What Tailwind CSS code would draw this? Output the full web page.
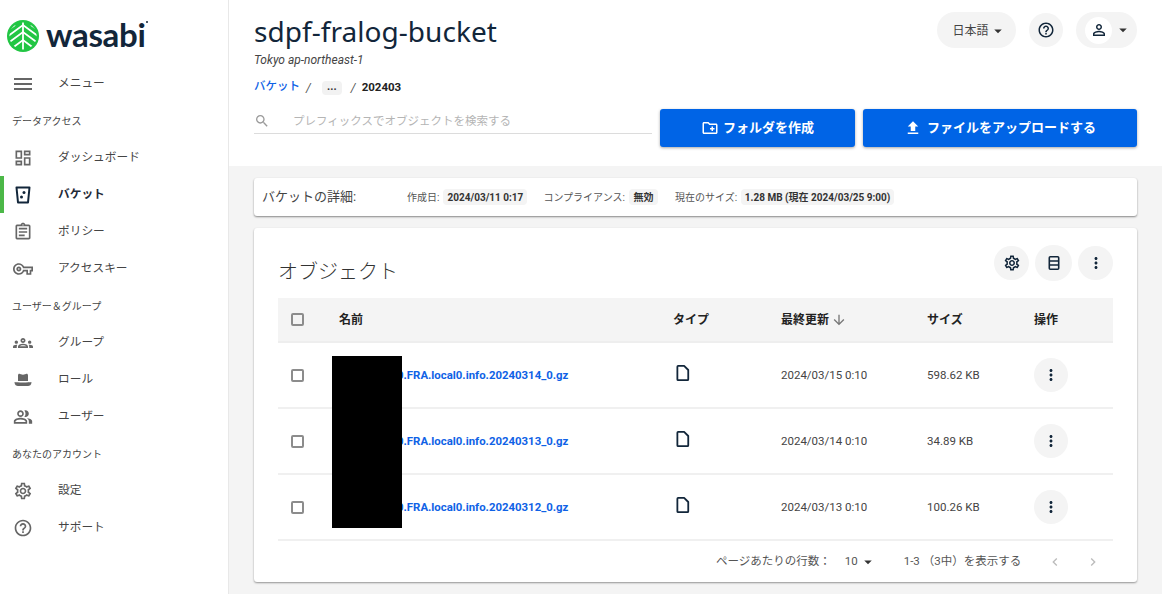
<!DOCTYPE html>
<html lang="ja">
<head>
  <meta charset="UTF-8">
  <meta name="viewport" content="width=device-width, initial-scale=1.0">
  <title>sdpf-fralog-bucket</title>
  <script src="https://cdn.jsdelivr.net/npm/@tailwindcss/browser@4"></script>
</head>
<body class="bg-white h-[594px] w-[1162px] overflow-hidden flex font-['Roboto','Noto_Sans_CJK_JP',sans-serif] text-[#333]">
  <svg class="hidden">
    <symbol id="i-more" viewBox="0 0 24 24"><path d="M12 8c1.100 0 2-.9 2-2s-.9-2-2-2-2 .9-2 2 .9 2 2 2zm0 2c-1.100 0-2 .9-2 2s.9 2 2 2 2-.9 2-2-.9-2-2-2zm0 6c-1.100 0-2 .9-2 2s.9 2 2 2 2-.9 2-2-.9-2-2-2z"/></symbol>
    <symbol id="i-gear" viewBox="0 0 24 24"><path d="M19.43 12.98c.04-.32.07-.64.07-.98 0-.34-.03-.66-.07-.98l2.11-1.65c.19-.15.24-.42.12-.64l-2-3.46c-.09-.16-.26-.25-.44-.25-.06 0-.12.01-.17.03l-2.49 1c-.52-.4-1.08-.73-1.69-.98l-.38-2.65C14.46 2.18 14.25 2 14 2h-4c-.25 0-.46.18-.49.42l-.38 2.65c-.61.25-1.17.59-1.69.98l-2.49-1c-.06-.02-.12-.03-.18-.03-.17 0-.34.09-.43.25l-2 3.46c-.13.22-.07.49.12.64l2.11 1.65c-.04.32-.07.65-.07.98 0 .33.03.66.07.98l-2.11 1.65c-.19.15-.24.42-.12.64l2 3.46c.09.16.26.25.44.25.06 0 .12-.01.17-.03l2.49-1c.52.4 1.08.73 1.69.98l.38 2.65c.03.24.24.42.49.42h4c.25 0 .46-.18.49-.42l.38-2.65c.61-.25 1.17-.59 1.69-.98l2.49 1c.06.02.12.03.18.03.17 0 .34-.09.43-.25l2-3.46c.12-.22.07-.49-.12-.64l-2.11-1.65zm-1.98-1.71c.04.31.05.52.05.73 0 .21-.02.43-.05.73l-.14 1.13.89.7 1.08.84-.7 1.21-1.27-.51-1.04-.42-.9.68c-.43.32-.84.56-1.25.73l-1.06.43-.16 1.13-.2 1.35h-1.4l-.19-1.35-.16-1.13-1.06-.43c-.43-.18-.83-.41-1.23-.71l-.91-.7-1.06.43-1.27.51-.7-1.21 1.08-.84.89-.7-.14-1.13c-.03-.31-.05-.54-.05-.74s.02-.43.05-.73l.14-1.13-.89-.7-1.08-.84.7-1.21 1.27.51 1.04.42.9-.68c.43-.32.84-.56 1.25-.73l1.06-.43.16-1.13.2-1.35h1.39l.19 1.35.16 1.13 1.06.43c.43.18.83.41 1.23.71l.91.7 1.06-.43 1.27-.51.7 1.21-1.07.85-.89.7.14 1.13zM12 8c-2.21 0-4 1.79-4 4s1.79 4 4 4 4-1.79 4-4-1.79-4-4-4zm0 6c-1.100 0-2-.9-2-2s.9-2 2-2 2 .9 2 2-.9 2-2 2z"/></symbol>
    <symbol id="i-help" viewBox="0 0 24 24"><path d="M11 18h2v-2h-2v2zm1-16C6.48 2 2 6.48 2 12s4.48 10 10 10 10-4.48 10-10S17.52 2 12 2zm0 18c-4.41 0-8-3.59-8-8s3.59-8 8-8 8 3.59 8 8-3.59 8-8 8zm0-14c-2.21 0-4 1.79-4 4h2c0-1.100.9-2 2-2s2 .9 2 2c0 2-3 1.75-3 5h2c0-2.25 3-2.5 3-5 0-2.21-1.79-4-4-4z"/></symbol>
    <symbol id="i-caret" viewBox="0 0 24 24"><path d="M7 10l5 5 5-5z"/></symbol>
    <symbol id="i-file" viewBox="0 0 24 24"><path d="M5.500 2.500h8l5.500 5.500v12.500a1 1 0 0 1-1 1H5.500a1 1 0 0 1-1-1v-17a1 1 0 0 1 1-1z" fill="none" stroke="#12263a" stroke-width="2.400" stroke-linejoin="round"/></symbol>
  </svg>

  <!-- サイドバー -->
  <aside class="w-[229px] shrink-0 border-r border-[#e8e8e8] bg-white">
    <div class="h-[65px] relative flex items-start pt-[20px] pl-[7px]">
      <svg class="w-[32px] h-[32px] shrink-0" viewBox="0 0 32 32">
        <defs><clipPath id="logo-clip"><circle cx="16" cy="16" r="13.600"/></clipPath></defs>
        <circle cx="16" cy="16" r="16" fill="#22c644"/>
        <g clip-path="url(#logo-clip)" fill="none" stroke="#fff" stroke-width="1.800">
          <path d="M16 2v28"/>
          <path d="M1 10l7-5M31 10l-7-5"/>
          <path d="M1 16l15-11 15 11"/>
          <path d="M1 23l15-11 15 11"/>
          <path d="M4 29l12-9 12 9"/>
        </g>
      </svg>
      <span class="ml-[7px] mt-[-6px] text-[33px] leading-[40px] font-bold tracking-[-0.3px] text-[#12263a] font-['Lato',sans-serif]">wasabi</span>
      <span class="w-[2px] h-[2px] mt-[1px] rounded-full bg-[#12263a]"></span>
    </div>
    <nav class="text-[11.7px] text-[#444]">
      <div class="h-[37px] flex items-center">
        <svg class="w-[24px] h-[24px] ml-[11px] fill-[#666]" viewBox="0 0 24 24"><path d="M3 18h18v-2H3v2zm0-5h18v-2H3v2zm0-7v2h18V6H3z"/></svg>
        <span class="ml-[23px] pt-[1px]">メニュー</span>
      </div>
      <div class="h-[37px] flex items-center pl-[12px] pt-[2px] text-[10px] text-[#444]">データアクセス</div>
      <div class="h-[37px] flex items-center">
        <svg class="w-[20px] h-[20px] ml-[13px] fill-[#666]" viewBox="0 0 24 24"><path d="M19 5v2h-4V5h4M9 5v6H5V5h4m10 8v6h-4v-6h4M9 17v2H5v-2h4M21 3h-8v6h8V3zM11 3H3v10h8V3zm10 8h-8v10h8V11zm-10 4H3v6h8v-6z"/></svg>
        <span class="ml-[25px] pt-[1px]">ダッシュボード</span>
      </div>
      <div class="h-[37px] flex items-center border-l-[4px] border-[#4cb848] font-bold text-[#1f2a37]">
        <svg class="w-[20px] h-[20px] ml-[9px]" viewBox="0 0 20 20"><path d="M3.500 2.500h13l-1.500 15H5z" fill="none" stroke="#12263a" stroke-width="2" stroke-linejoin="round"/><circle cx="11" cy="7.500" r="1.500" fill="#12263a"/><circle cx="8.500" cy="12" r="1.500" fill="#12263a"/></svg>
        <span class="ml-[25px] pt-[1px]">バケット</span>
      </div>
      <div class="h-[37px] flex items-center">
        <svg class="w-[20px] h-[20px] ml-[13px] fill-[#666]" viewBox="0 0 24 24"><path d="M7 15h7v2H7zm0-4h10v2H7zm0-4h10v2H7zm12-4h-4.18C14.4 1.84 13.3 1 12 1c-1.3 0-2.4.84-2.82 2H5c-.14 0-.27.01-.4.04-.39.08-.74.28-1.01.55-.18.18-.33.4-.43.64-.1.23-.16.49-.16.77v14c0 .27.06.54.16.78s.25.45.43.64c.27.27.62.47 1.01.55.13.02.26.03.4.03h14c1.100 0 2-.9 2-2V5c0-1.100-.9-2-2-2zm-7-.25c.41 0 .75.34.75.75s-.34.75-.75.75-.75-.34-.75-.75.34-.75.75-.75zM19 19H5V5h14v14z"/></svg>
        <span class="ml-[25px] pt-[1px]">ポリシー</span>
      </div>
      <div class="h-[37px] flex items-center">
        <svg class="w-[20px] h-[20px] ml-[13px] fill-[#666]" viewBox="0 0 24 24"><path d="M22 19h-6v-4h-2.68c-1.14 2.42-3.6 4-6.32 4-3.86 0-7-3.14-7-7s3.14-7 7-7c2.72 0 5.17 1.58 6.32 4H24v6h-2v4zm-4-2h2v-4h2v-2H11.94l-.23-.67C11.01 8.34 9.11 7 7 7c-2.76 0-5 2.24-5 5s2.24 5 5 5c2.11 0 4.01-1.34 4.71-3.33l.23-.67H18v4zM7 15c-1.65 0-3-1.35-3-3s1.35-3 3-3 3 1.35 3 3-1.35 3-3 3zm0-4c-.55 0-1 .45-1 1s.45 1 1 1 1-.45 1-1-.45-1-1-1z"/></svg>
        <span class="ml-[25px] pt-[1px]">アクセスキー</span>
      </div>
      <div class="h-[37px] flex items-center pl-[12px] pt-[2px] text-[10px] text-[#444]">ユーザー＆グループ</div>
      <div class="h-[37px] flex items-center">
        <svg class="w-[20px] h-[20px] ml-[13px] fill-[#666]" viewBox="0 0 24 24"><path d="M4 13c1.100 0 2-.9 2-2s-.9-2-2-2-2 .9-2 2 .9 2 2 2zm1.13 1.100c-.37-.06-.74-.1-1.13-.1-.99 0-1.93.21-2.78.58C.48 14.9 0 15.62 0 16.43V18h4.500v-1.61c0-.83.23-1.61.63-2.29zM20 13c1.100 0 2-.9 2-2s-.9-2-2-2-2 .9-2 2 .9 2 2 2zm4 3.43c0-.81-.48-1.53-1.22-1.85-.85-.37-1.79-.58-2.78-.58-.39 0-.76.04-1.13.1.4.68.63 1.46.63 2.29V18H24v-1.57zm-7.76-2.78c-1.17-.52-2.61-.9-4.24-.9-1.63 0-3.07.39-4.24.9C6.68 14.13 6 15.21 6 16.39V18h12v-1.61c0-1.18-.68-2.26-1.76-2.74zM8.07 16c.09-.23.13-.39.91-.69.97-.38 1.99-.56 3.02-.56s2.05.18 3.02.56c.77.3.81.46.91.69H8.07zM12 8c.55 0 1 .45 1 1s-.45 1-1 1-1-.45-1-1 .45-1 1-1m0-2c-1.66 0-3 1.34-3 3s1.34 3 3 3 3-1.34 3-3-1.34-3-3-3z"/></svg>
        <span class="ml-[25px] pt-[1px]">グループ</span>
      </div>
      <div class="h-[37px] flex items-center">
        <svg class="w-[20px] h-[20px] ml-[13px] fill-[#666]" viewBox="0 0 20 20"><path d="M5 5.500C5 4 6 3.500 7 4l3 .8L13 4c1-.5 2 0 2 1.500V11H5z"/><path d="M1.500 12c2 .6 15 .6 17 0 0 3-2 4-3.500 4H5c-1.500 0-3.500-1-3.500-4z"/></svg>
        <span class="ml-[25px] pt-[1px]">ロール</span>
      </div>
      <div class="h-[37px] flex items-center">
        <svg class="w-[20px] h-[20px] ml-[13px] fill-[#666]" viewBox="0 0 24 24"><path d="M16.67 13.13C18.04 14.06 19 15.32 19 17v3h4v-3c0-2.18-3.57-3.47-6.33-3.87zM15 12c2.21 0 4-1.79 4-4s-1.79-4-4-4c-.47 0-.91.1-1.33.24C14.5 5.27 15 6.58 15 8s-.5 2.73-1.33 3.76c.42.14.86.24 1.33.24zM9 12c2.21 0 4-1.79 4-4s-1.79-4-4-4-4 1.79-4 4 1.79 4 4 4zm0-6c1.100 0 2 .9 2 2s-.9 2-2 2-2-.9-2-2 .9-2 2-2zM9 13c-2.67 0-8 1.34-8 4v3h16v-3c0-2.66-5.33-4-8-4zm6 5H3v-.99C3.2 16.29 6.3 15 9 15s5.800 1.290 6 2v1z"/></svg>
        <span class="ml-[25px] pt-[1px]">ユーザー</span>
      </div>
      <div class="h-[37px] flex items-center pl-[12px] pt-[2px] text-[10px] text-[#444]">あなたのアカウント</div>
      <div class="h-[37px] flex items-center">
        <svg class="w-[20px] h-[20px] ml-[13px] fill-[#666]"><use href="#i-gear"/></svg>
        <span class="ml-[25px] pt-[1px]">設定</span>
      </div>
      <div class="h-[37px] flex items-center">
        <svg class="w-[20px] h-[20px] ml-[13px] fill-[#666]"><use href="#i-help"/></svg>
        <span class="ml-[25px] pt-[1px]">サポート</span>
      </div>
    </nav>
  </aside>

  <main class="flex-1 min-w-0 bg-[#f4f4f4]">
    <!-- ヘッダー -->
    <header class="h-[166px] bg-white pl-[25px] pr-[25px] pt-[11px]">
      <div class="h-[98px] flex justify-between items-start">
        <div>
          <h1 class="text-[28px] leading-[40px] text-[#12263a] tracking-[0.05px] font-['Noto_Sans',sans-serif]">sdpf-fralog-bucket</h1>
          <p class="text-[12px] leading-[16px] italic text-[#444] mt-[1px]">Tokyo ap-northeast-1</p>
          <div class="flex items-center h-[20px] mt-[10px] text-[12px]">
            <span class="text-[11.500px] font-medium text-[#0f62e6] -mt-[3px]">バケット</span>
            <span class="ml-[6px] italic text-[#555]">/</span>
            <span class="ml-[11px] w-[20px] h-[14px] rounded-sm bg-[#f2f2f2] flex items-center justify-center text-[11px] font-bold leading-none pb-[3px]">...</span>
            <span class="ml-[9px] italic text-[#555]">/</span>
            <span class="ml-[6px] text-[11.500px] font-bold text-[#222]">202403</span>
          </div>
        </div>
        <div class="flex items-center pt-[1px]">
          <button class="w-[79px] h-[36px] rounded-full bg-[#f4f4f4] flex items-center justify-center pl-[6px] pt-[1px] text-[12px] text-[#444]">
            日本語<svg class="w-[18px] h-[18px] fill-[#333]"><use href="#i-caret"/></svg>
          </button>
          <button class="ml-[13px] w-[34px] h-[34px] rounded-full bg-[#f4f4f4] flex items-center justify-center">
            <svg class="w-[18px] h-[18px] fill-[#12263a]"><use href="#i-help"/></svg>
          </button>
          <button class="ml-[13px] w-[61px] h-[36px] rounded-full bg-[#f4f4f4] flex items-center pl-[9px]">
            <span class="w-[27px] h-[27px] rounded-full bg-white flex items-center justify-center">
              <svg class="w-[18px] h-[18px] fill-[#12263a]" viewBox="0 0 24 24"><path d="M12 5.900c1.160 0 2.100.94 2.100 2.100s-.94 2.100-2.100 2.100S9.900 9.160 9.900 8s.94-2.100 2.100-2.100m0 9c2.970 0 6.100 1.460 6.100 2.100v1.100H5.900V17c0-.64 3.130-2.100 6.100-2.100M12 4C9.790 4 8 5.790 8 8s1.790 4 4 4 4-1.790 4-4-1.790-4-4-4zm0 9c-2.670 0-8 1.340-8 4v3h16v-3c0-2.660-5.330-4-8-4z"/></svg>
            </span>
            <svg class="w-[18px] h-[18px] ml-[2px] fill-[#333]"><use href="#i-caret"/></svg>
          </button>
        </div>
      </div>
      <div class="flex items-start">
        <div class="w-[398px] h-[25px] border-b border-[#dcdcdc] flex items-center">
          <svg class="w-[16px] h-[16px] fill-[#9a9a9a] shrink-0" viewBox="0 0 24 24"><path d="M15.500 14h-.79l-.28-.27C15.410 12.590 16 11.110 16 9.500 16 5.910 13.090 3 9.500 3S3 5.910 3 9.500 5.910 16 9.500 16c1.610 0 3.090-.59 4.230-1.570l.27.28v.79l5 4.990L20.490 19l-4.990-5zm-6 0C7.010 14 5 11.990 5 9.500S7.010 5 9.500 5 14 7.010 14 9.500 11.990 14 9.500 14z"/></svg>
          <span class="ml-[23px] pt-[1px] text-[11.500px] text-[#b5b5b5]">プレフィックスでオブジェクトを検索する</span>
        </div>
        <button class="ml-[8px] w-[195px] h-[38px] rounded-[3px] bg-[#0064e6] shadow-[0_1px_3px_rgba(0,0,0,0.35)] flex items-center justify-center text-white text-[13px] font-bold">
          <svg class="w-[18px] h-[18px] fill-white mr-[4px]" viewBox="0 0 24 24"><path d="M20 6h-8l-2-2H4c-1.110 0-1.990.89-1.990 2L2 18c0 1.110.89 2 2 2h16c1.110 0 2-.89 2-2V8c0-1.110-.89-2-2-2zm0 12H4V6h5.170l2 2H20v10zm-8-4h2v2h2v-2h2v-2h-2v-2h-2v2h-2z"/></svg>
          フォルダを作成
        </button>
        <button class="ml-[8px] w-[274px] h-[38px] rounded-[3px] bg-[#0064e6] shadow-[0_1px_3px_rgba(0,0,0,0.35)] flex items-center justify-center text-white text-[13px] font-bold">
          <svg class="w-[18px] h-[18px] fill-white mr-[5px]" viewBox="0 0 24 24"><path d="M5 20h14v-2H5v2zm0-10h4v6h6v-6h4l-7-7-7 7z"/></svg>
          ファイルをアップロードする
        </button>
      </div>
    </header>

    <div class="px-[25px] pt-[12px]">
      <!-- バケットの詳細 -->
      <section class="h-[38px] bg-white rounded-[3px] shadow-[0_1px_2px_rgba(0,0,0,0.45)] flex items-center pl-[8px] text-[10px] text-[#555]">
        <span class="w-[145px] text-[13px] text-[#444]">バケットの詳細:</span>
        <span>作成日:</span>
        <span class="ml-[4px] w-[84px] h-[16px] rounded-sm bg-[#f4f4f4] flex items-center justify-center font-bold text-[#333]">2024/03/11 0:17</span>
        <span class="ml-[16px]">コンプライアンス:</span>
        <span class="ml-[4px] w-[29px] h-[16px] rounded-sm bg-[#f4f4f4] flex items-center justify-center font-bold text-[#333]">無効</span>
        <span class="ml-[17px]">現在のサイズ:</span>
        <span class="ml-[4px] w-[153px] h-[16px] rounded-sm bg-[#f4f4f4] flex items-center justify-center font-bold text-[#333]">1.28 MB (現在 2024/03/25 9:00)</span>
      </section>

      <!-- オブジェクト -->
      <section class="mt-[12px] h-[354px] bg-white rounded-[3px] shadow-[0_1px_2px_rgba(0,0,0,0.4)] px-[24px] relative">
        <div class="h-[70px] flex items-center justify-between pt-[17px]">
          <h2 class="text-[20px] text-[#333] font-light">オブジェクト</h2>
          <div class="flex items-center gap-[6px] mt-[-17px]">
            <span class="w-[35px] h-[34px] rounded-full bg-[#f4f4f4] flex items-center justify-center"><svg class="w-[18px] h-[18px] fill-[#12263a]"><use href="#i-gear"/></svg></span>
            <span class="w-[37px] h-[36px] rounded-full bg-[#f4f4f4] flex items-center justify-center">
              <svg class="w-[16px] h-[16px]" viewBox="0 0 16 16" fill="none" stroke="#12263a" stroke-width="1.600"><rect x="3.300" y="1.800" width="9.400" height="12.400" rx="1"/><path d="M3.300 6h9.400M3.300 10h9.400"/></svg>
            </span>
            <span class="w-[35px] h-[34px] rounded-full bg-[#f4f4f4] flex items-center justify-center"><svg class="w-[18px] h-[18px] fill-[#12263a]"><use href="#i-more"/></svg></span>
          </div>
        </div>

        <div class="grid grid-cols-[61px_334px_108px_146px_107px_1fr] items-center h-[45px] bg-[#f4f4f4] border-b-2 border-[#eee] text-[12px] font-bold text-[#222]">
          <span class="w-[13px] h-[13px] ml-[13px] border-2 border-[#8c8c8c] rounded-[2px] bg-transparent"></span>
          <span>名前</span>
          <span>タイプ</span>
          <span class="flex items-center">最終更新<svg class="w-[16px] h-[16px] ml-[2px] fill-[#777]" viewBox="0 0 24 24"><path d="M20 12l-1.410-1.410L13 16.170V4h-2v12.170l-5.580-5.590L4 12l8 8 8-8z"/></svg></span>
          <span>サイズ</span>
          <span>操作</span>
        </div>

        <div class="grid grid-cols-[61px_334px_108px_146px_107px_1fr] items-center h-[66px] border-b-2 border-[#f0f0f0] text-[11.500px] text-[#444]">
          <span class="w-[13px] h-[13px] ml-[13px] border-2 border-[#8c8c8c] rounded-[2px]"></span>
          <a class="pl-[58px] pt-[1px] text-[11.400px] font-bold text-[#0f62e6]">0.FRA.local0.info.20240314_0.gz</a>
          <svg class="w-[18px] h-[18px] ml-[1px] -mt-[5px]"><use href="#i-file"/></svg>
          <span class="pt-[1px]">2024/03/15 0:10</span>
          <span class="pt-[1px]">598.62 KB</span>
          <span class="w-[34px] h-[34px] rounded-full bg-[#f4f4f4] flex items-center justify-center"><svg class="w-[18px] h-[18px] fill-[#12263a]"><use href="#i-more"/></svg></span>
        </div>
        <div class="grid grid-cols-[61px_334px_108px_146px_107px_1fr] items-center h-[66px] border-b-2 border-[#f0f0f0] text-[11.500px] text-[#444]">
          <span class="w-[13px] h-[13px] ml-[13px] border-2 border-[#8c8c8c] rounded-[2px]"></span>
          <a class="pl-[58px] pt-[1px] text-[11.400px] font-bold text-[#0f62e6]">0.FRA.local0.info.20240313_0.gz</a>
          <svg class="w-[18px] h-[18px] ml-[1px] -mt-[5px]"><use href="#i-file"/></svg>
          <span class="pt-[1px]">2024/03/14 0:10</span>
          <span class="pt-[1px]">34.89 KB</span>
          <span class="w-[34px] h-[34px] rounded-full bg-[#f4f4f4] flex items-center justify-center"><svg class="w-[18px] h-[18px] fill-[#12263a]"><use href="#i-more"/></svg></span>
        </div>
        <div class="grid grid-cols-[61px_334px_108px_146px_107px_1fr] items-center h-[66px] border-b-2 border-[#f0f0f0] text-[11.500px] text-[#444]">
          <span class="w-[13px] h-[13px] ml-[13px] border-2 border-[#8c8c8c] rounded-[2px]"></span>
          <a class="pl-[58px] pt-[1px] text-[11.400px] font-bold text-[#0f62e6]">0.FRA.local0.info.20240312_0.gz</a>
          <svg class="w-[18px] h-[18px] ml-[1px] -mt-[5px]"><use href="#i-file"/></svg>
          <span class="pt-[1px]">2024/03/13 0:10</span>
          <span class="pt-[1px]">100.26 KB</span>
          <span class="w-[34px] h-[34px] rounded-full bg-[#f4f4f4] flex items-center justify-center"><svg class="w-[18px] h-[18px] fill-[#12263a]"><use href="#i-more"/></svg></span>
        </div>

        <div class="h-[41px] flex items-center text-[11.500px] text-[#555] pl-[438px]">
          <span>ページあたりの行数：</span>
          <span class="ml-[14px]">10</span>
          <svg class="w-[18px] h-[18px] ml-[1px] fill-[#333]"><use href="#i-caret"/></svg>
          <span class="ml-[27px]">1-3 （3中）を表示する</span>
          <svg class="w-[16px] h-[16px] ml-[26px] fill-[#bbb]" viewBox="0 0 24 24"><path d="M15.410 7.410L14 6l-6 6 6 6 1.410-1.410L10.830 12z"/></svg>
          <svg class="w-[16px] h-[16px] ml-[22px] fill-[#bbb]" viewBox="0 0 24 24"><path d="M10 6L8.590 7.410 13.170 12l-4.580 4.580L10 18l6-6z"/></svg>
        </div>

        <!-- 黒塗り -->
        <div class="absolute left-[78px] top-[128px] w-[70px] h-[172px] bg-black"></div>
      </section>
    </div>
  </main>
</body>
</html>
